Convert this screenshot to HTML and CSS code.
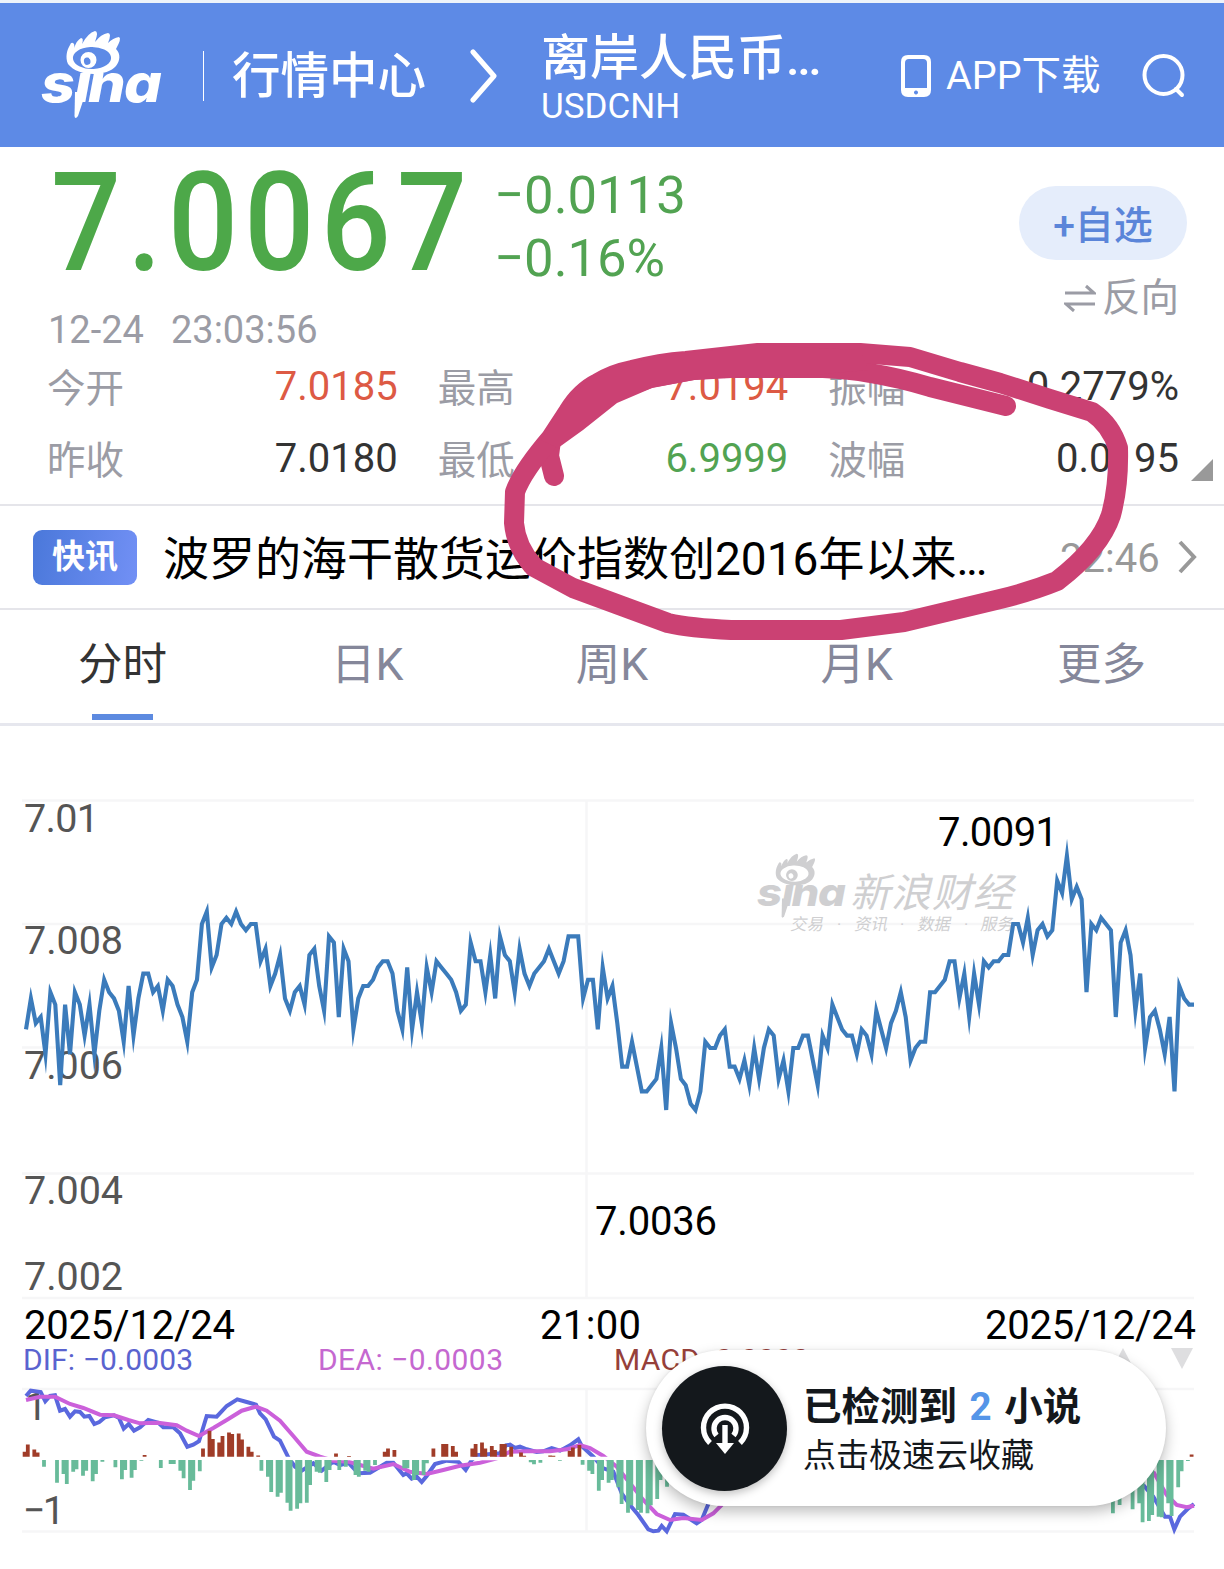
FILE: index.html
```html
<!DOCTYPE html>
<html lang="zh-CN">
<head>
  <meta charset="UTF-8" />
  <meta name="viewport" content="width=device-width, initial-scale=1.0" />
  <title>离岸人民币 USDCNH</title>
  <link rel="stylesheet" href="styles.css">
</head>
<body>
  <header class="topbar">
    <svg class="logo" viewBox="0 0 124 92">
      <g id="sina" fill="currentColor">
        <path fill-rule="evenodd" d="M27 34 C24 27 26 20 29 15 Q30 12 32 13 Q34 14 33 18 Q36 10 40 8 Q43 8 41 14 Q47 3 54 1 Q58 1 54 12 Q60 4 67 3 Q71 3 67 13 Q72 8 78 7 Q81 8 75 19 C80 24 79 31 75 36 C66 47 37 47 27 34 Z M32 29 a19 11 0 1 0 38 -2 a19 11 0 1 0 -38 2 Z"/>
        <path fill-rule="evenodd" d="M39.5 30 a8 8 0 1 1 16 0 a8 8 0 1 1 -16 0 Z M43 32 a3.2 3.6 0 1 0 6.4 -1.6 a3.2 3.6 0 1 0 -6.4 1.6 Z"/>
        <circle cx="49.5" cy="28" r="1.3"/>
        <path d="M34 62 L45 62 L37 86 Q34 90 33.500 86 Z"/>
        <text class="logo-text" transform="scale(1.12 1)" x="0 30 42 74" y="72">sına</text>
      </g>
    </svg>
    <span class="divider"></span>
    <span class="market">行情中心</span>
    <svg class="crumb" viewBox="0 0 28 54"><path d="M3 3 L24 27 L3 51"/></svg>
    <div class="symbol">
      <div class="symbol-name">离岸人民币<span class="dots">...</span></div>
      <div class="symbol-code">USDCNH</div>
    </div>
    <div class="app">
      <svg class="phone" viewBox="0 0 30 42"><path fill="currentColor" fill-rule="evenodd" d="M7 0 H23 Q30 0 30 7 V35 Q30 42 23 42 H7 Q0 42 0 35 V7 Q0 0 7 0 Z M8 4 Q4 4 4 8 V33 H26 V8 Q26 4 22 4 Z M15 35.5 a2 2 0 1 0 .01 0 Z"/></svg>
      <span>APP下载</span>
    </div>
    <svg class="search" viewBox="0 0 44 44"><ellipse cx="21.500" cy="21" rx="19" ry="19"/><path d="M34 35 L40 41"/></svg>
  </header>

  <section class="quote">
    <div class="quote-main">
      <div class="price">7.0067</div>
      <div class="change">
        <div>−0.0113</div>
        <div>−0.16%</div>
      </div>
      <div class="actions">
        <button class="add">+自选</button>
        <div class="reverse">
          <svg viewBox="0 0 32 28"><path d="M1 9 H30 L22 2 M31 20 H2 L10 27"/></svg>
          <span>反向</span>
        </div>
      </div>
    </div>
    <div class="time"><span>12-24</span><span>23:03:56</span></div>
    <div class="stats">
      <div class="stat"><span>今开</span><b class="up">7.0185</b></div>
      <div class="stat"><span>最高</span><b class="up">7.0194</b></div>
      <div class="stat"><span>振幅</span><b>0.2779%</b></div>
      <div class="stat"><span>昨收</span><b>7.0180</b></div>
      <div class="stat"><span>最低</span><b class="down">6.9999</b></div>
      <div class="stat"><span>波幅</span><b>0.0195</b></div>
    </div>
    <span class="expand"></span>
  </section>

  <section class="news">
    <span class="badge">快讯</span>
    <span class="headline">波罗的海干散货运价指数创2016年以来<span class="dots">...</span></span>
    <span class="news-time">22:46</span>
    <svg class="more" viewBox="0 0 20 36"><path d="M3 3 L17 18 L3 33"/></svg>
  </section>

  <nav class="tabs">
    <span class="tab active">分时</span>
    <span class="tab">日K</span>
    <span class="tab">周K</span>
    <span class="tab">月K</span>
    <span class="tab">更多</span>
  </nav>

  <svg class="chart" viewBox="0 726 1224 843">
    <g class="grid">
      <path d="M22 800.5 H1194 M22 924 H1194 M22 1047.5 H1194 M22 1173.5 H1194 M22 1298 H1194 M586.5 800 V1298"/>
      <path d="M22 1389 H1194 M22 1531.5 H1194 M586.5 1389 V1531"/>
    </g>
    <g class="watermark">
      <use href="#sina" transform="translate(757 853) scale(.735)"/>
      <text transform="translate(850 907) skewX(-14)" font-size="40" textLength="163">新浪财经</text>
      <g font-size="16.500">
        <text transform="translate(790 930) skewX(-12)">交易</text>
        <text transform="translate(837 930)">·</text>
        <text transform="translate(854 930) skewX(-12)">资讯</text>
        <text transform="translate(900 930)">·</text>
        <text transform="translate(917 930) skewX(-12)">数据</text>
        <text transform="translate(964 930)">·</text>
        <text transform="translate(980 930) skewX(-12)">服务</text>
      </g>
    </g>
    <g class="axis">
      <text x="24" y="832" textLength="75">7.01</text>
      <text x="24" y="954" textLength="99">7.008</text>
      <text x="24" y="1079" textLength="99">7.006</text>
      <text x="24" y="1204" textLength="99">7.004</text>
      <text x="24" y="1290" textLength="99">7.002</text>
      <text x="25" y="1420">1</text>
      <text x="23" y="1524" textLength="42">−1</text>
    </g>
    <polyline id="priceLine" class="price-line"/>
    <g class="mark">
      <text x="938" y="846" textLength="120">7.0091</text>
      <text x="595" y="1235" textLength="122">7.0036</text>
      <text x="24" y="1339" textLength="211">2025/12/24</text>
      <text x="540" y="1339" textLength="101">21:00</text>
      <text x="985" y="1339" textLength="211">2025/12/24</text>
    </g>
    <g class="legend">
      <text x="23" y="1370" textLength="170" class="dif">DIF: −0.0003</text>
      <text x="318" y="1370" textLength="185" class="dea">DEA: −0.0003</text>
      <text x="614" y="1370" textLength="195" class="macd">MACD: 0.0000</text>
    </g>
    <path d="M1112 1369 L1123 1348 L1134 1369 Z M1171 1348 H1193 L1182 1369 Z" fill="#dedee0"/>
    <polyline id="difLine" class="dif-line"/>
    <polyline id="difTail" class="dif-line"/>
    <polyline id="deaLine" class="dea-line"/>
    <polyline id="deaTail" class="dea-line"/>
    <path d="M22 1458.5 H1194" stroke="#fff" stroke-width="3.4"/>
    <path id="barsUp" fill="#a03c28"/>
    <path id="barsDown" fill="#68bb9a"/>
  </svg>

  <!-- hand-drawn circle -->
  <svg class="scribble" viewBox="0 0 1224 1569">
    <path class="ink" d="M554 476 L549 456 L551 440 L573 414 L608 393 L650 378 L694 370 L731 368 L823 368 Q850 369 870 373 Q900 378 930 387 L1006 406"/>
    <path class="ink" d="M860 353 L910 357 L960 372 L1000 383 L1050 399 L1092 412 Q1111 425 1118 448 Q1119 485 1111 515 Q1100 548 1057 581 Q1030 592 996 600 L904 622 L841 630 L731 630 Q690 628 668 623 L573 588 L534 567 Q516 547 514 523 L515 492 Q522 472 551 438 L568 412 Q580 392 598 383 Q612 374 632 370 Q660 363 686 361 L758 353 Z"/>
    <path class="ink-fill" d="M541 440 L560 408 L592 377 L629 362 L685 353 L758 345 L860 350 L868 370 L823 374 L731 377 L694 380 L652 388 L617 403 L583 430 L558 448 Z"/>
  </svg>

  <div class="toast">
    <div class="toast-icon">
      <svg viewBox="0 0 54 54">
        <path d="M12 42 A21.5 21.5 0 1 1 42 42" />
        <path d="M18.5 34.500 A11 11 0 1 1 35.5 34.500"/>
        <path d="M27 24 V44"/>
        <path class="head" d="M18 42 H36 L27 53 Z"/>
      </svg>
    </div>
    <div class="toast-text">
      <div class="toast-title">已检测到 <em>2</em> 小说</div>
      <div class="toast-sub">点击极速云收藏</div>
    </div>
  </div>

  <script src="script.js"></script>
</body>
</html>
```

FILE: styles.css
```css
* {
  box-sizing: border-box;
}
body {
  margin: 0;
  width: 1224px;
  height: 1569px;
  position: relative;
  overflow: hidden;
  background: #fff;
  color: #333;
  font-family: Roboto, "Noto Sans CJK SC", sans-serif;
}
svg {
  display: block;
  flex: none;
}
.topbar {
  display: flex;
  align-items: center;
  height: 147px;
  border-top: 3px solid #edf3fa;
  padding: 2px 38px 0 41px;
  background: #5d8ae6;
  color: #fff;
  white-space: nowrap;
}
.logo {
  width: 124px;
  height: 92px;
}
.logo-text {
  font: italic 800 53px Inter, "Open Sans", sans-serif;
}
.divider {
  width: 1px;
  height: 50px;
  margin: 0 28px 0 38px;
  background: #fff;
}
.market {
  width: 194px;
  padding-top: 2px;
  font-size: 48.5px;
  font-weight: 500;
  line-height: 60px;
}
.crumb {
  width: 28px;
  height: 54px;
  margin: 0 43px 0 44px;
  fill: none;
  stroke: #fff;
  stroke-width: 5;
  stroke-linecap: round;
  stroke-linejoin: round;
}
.symbol {
  width: 360px;
}
.symbol-name {
  padding-top: 9px;
  font-size: 49px;
  font-weight: 500;
  line-height: 52px;
}
.dots {
  letter-spacing: -2.5px;
}
.symbol-code {
  font-size: 35px;
  line-height: 44px;
}
.app {
  display: flex;
  align-items: center;
  gap: 15px;
  font-size: 39.5px;
  line-height: 50px;
}
.phone {
  width: 30px;
  height: 42px;
}
.search {
  width: 44px;
  height: 44px;
  margin-left: auto;
  fill: none;
  stroke: #fff;
  stroke-width: 4;
  stroke-linecap: round;
}

.quote {
  position: relative;
  height: 359px;
  border-bottom: 2px solid #e5e5ea;
}
.quote-main {
  display: flex;
  height: 162px;
  padding: 0 37px 0 51px;
}
.price {
  width: 443px;
  color: #4da849;
  font-size: 137px;
  font-weight: 500;
  letter-spacing: 7px;
  line-height: 152px;
  transform: scaleX(0.9);
  transform-origin: left;
}
.change {
  padding-top: 17px;
  color: #52a352;
  font-size: 52.6px;
  line-height: 62.5px;
}
.actions {
  display: flex;
  flex-direction: column;
  align-items: flex-end;
  margin-left: auto;
  padding-top: 39px;
}
.add {
  flex: none;
  width: 168px;
  height: 74px;
  padding: 0 0 2px;
  border: 0;
  border-radius: 37px;
  background: #e5edfb;
  color: #5b85d9;
  font: 500 39px Roboto, "Noto Sans CJK SC", sans-serif;
}
.reverse {
  display: flex;
  align-items: center;
  gap: 6px;
  margin: 13px 8px 0 0;
  color: #9b9ca5;
  font-size: 38.5px;
  line-height: 50px;
}
.reverse svg {
  width: 32px;
  height: 28px;
  fill: none;
  stroke: #9b9ca5;
  stroke-width: 3;
}
.time {
  display: flex;
  gap: 27px;
  padding-left: 48px;
  color: #9b9ca5;
  font-size: 38px;
  line-height: 42px;
}
.stats {
  display: grid;
  grid-template-columns: repeat(3, 1fr);
  column-gap: 40px;
  margin: 0 45px 0 47px;
}
.stat {
  display: flex;
  justify-content: space-between;
  height: 72px;
  font-size: 38.5px;
  line-height: 72px;
  color: #9b9ca5;
}
.stat span {
  padding-top: 2px;
}
.stat b {
  color: #333;
  font-size: 40px;
  font-weight: 400;
}
.stat .up {
  color: #dd5a44;
}
.stat .down {
  color: #52a352;
}
.expand {
  position: absolute;
  left: 1191px;
  top: 312px;
  border-left: 22px solid transparent;
  border-bottom: 22px solid #999;
}

.news {
  display: flex;
  align-items: center;
  height: 104px;
  padding: 0 27px 0 33px;
  border-bottom: 2px solid #e5e5ea;
  white-space: nowrap;
}
.badge {
  flex: none;
  width: 104px;
  height: 55px;
  border-radius: 9px;
  background: linear-gradient(100deg, #4a78da, #7290f5);
  color: #fff;
  font-size: 33px;
  font-weight: 700;
  line-height: 54px;
  text-align: center;
}
.headline {
  flex: none;
  width: 923px;
  padding: 4px 0 0 26px;
  color: #000;
  font-size: 46px;
  line-height: 60px;
}
.news-time {
  padding-top: 2px;
  color: #999;
  font-size: 40px;
}
.more {
  width: 20px;
  height: 36px;
  margin-left: auto;
  fill: none;
  stroke: #999;
  stroke-width: 4;
}

.tabs {
  display: grid;
  grid-template-columns: repeat(5, 1fr);
  height: 116px;
  border-bottom: 3px solid #e6e7ee;
  text-align: center;
}
.tab {
  display: flex;
  flex-direction: column;
  align-items: center;
  color: #85879a;
  font-size: 44.5px;
  line-height: 110px;
}
.tab.active {
  color: #333;
}
.tab.active::after {
  content: "";
  width: 61px;
  height: 6px;
  margin-top: -6px;
  background: #5d8ae0;
}

.chart {
  width: 1224px;
  height: 843px;
}
.grid {
  fill: none;
  stroke: #f6f6f7;
  stroke-width: 2.5;
}
.watermark {
  color: #cfcfd1;
  fill: #cfcfd1;
}
.axis {
  fill: #555;
  font-size: 39.5px;
}
.mark {
  fill: #000;
  font-size: 40px;
}
.legend {
  font-size: 30px;
}
.dif {
  fill: #5a63cf;
}
.dea {
  fill: #c568d0;
}
.macd {
  fill: #96403a;
}
.price-line {
  fill: none;
  stroke: #3b7bbb;
  stroke-width: 4.1;
  stroke-miterlimit: 10;
}
.dif-line,
.dea-line {
  fill: none;
  stroke: #5a68de;
  stroke-width: 4;
}
.dea-line {
  stroke: #cb60da;
}

.scribble {
  position: absolute;
  left: 0;
  top: 0;
  width: 1224px;
  height: 1569px;
  pointer-events: none;
}
.ink {
  fill: none;
  stroke: #cb4173;
  stroke-width: 20;
  stroke-linecap: round;
  stroke-linejoin: round;
}
.ink-fill {
  fill: #cb4173;
}

.toast {
  position: absolute;
  left: 646px;
  top: 1350px;
  display: flex;
  align-items: center;
  gap: 16px;
  width: 520px;
  height: 156px;
  padding-left: 16px;
  border-radius: 78px;
  background: #fff;
  color: #14181c;
  box-shadow: 0 6px 14px rgba(0, 0, 0, 0.25), 0 0 3px rgba(0, 0, 0, 0.08);
}
.toast-icon {
  display: flex;
  align-items: center;
  justify-content: center;
  width: 125px;
  height: 125px;
  border-radius: 50%;
  background: #14181c;
  box-shadow: 0 3px 8px rgba(0, 0, 0, 0.25);
}
.toast-icon svg {
  width: 54px;
  height: 54px;
  fill: none;
  stroke: #fff;
  stroke-width: 5.4;
}
.toast-icon .head {
  fill: #fff;
  stroke: none;
}
.toast-text {
  padding-top: 5px;
}
.toast-title {
  font-size: 38.5px;
  font-weight: 700;
  line-height: 50px;
  word-spacing: 3px;
}
.toast-title em {
  color: #5595e8;
  font-style: normal;
}
.toast-sub {
  font-size: 33px;
  line-height: 48px;
}
```

FILE: script.js
```js
// ticks (0.0001) below 7.008, one per 2 minutes
const ticks = [
  17, 12, 16, 15, 21, 11, 13, 26, 13, 21, 11, 13, 18, 13, 21, 14, 9, 11, 12, 14,
  19, 10, 18, 12, 8, 8, 11, 10, 14, 9, 10, 13, 15, 19, 11, 9, 0, -2, 7, 5,
  0, -1, 0, -2, 0, 1, 0, 0, 6, 4, 10, 8, 5, 12, 14, 11, 10, 13, 5, 4,
  10, 14, 2, 3, 15, 4, 6, 17, 12, 10, 10, 9, 7, 6, 6, 8, 14, 17, 7, 17,
  11, 16, 7, 11, 6, 7, 8, 9, 11, 14, 13, 3, 6, 6, 11, 5, 12, 2, 5, 6,
  11, 4, 8, 10, 8, 7, 6, 4, 6, 8, 6, 2, 2, 2, 12, 9, 9, 17, 7, 12,
  10, 16, 23, 23, 19, 23, 27, 27, 26, 25, 20, 30, 16, 20, 25, 26, 29, 30, 27, 19,
  20, 20, 18, 17, 23, 23, 25, 22, 26, 20, 25, 20, 17, 18, 25, 22, 27, 20, 20, 18,
  18, 22, 26, 18, 20, 13, 15, 17, 18, 18, 21, 17, 18, 21, 14, 17, 20, 16, 14, 11,
  15, 22, 20, 19, 19, 11, 11, 10, 9, 6, 6, 12, 8, 15, 8, 13, 6, 7, 6, 6,
  5, 5, 0, 0, 3, -1, 5, 1, 0, 2, 1, -7, -5, -11, -4, -6, -4, 11, 0, 1,
  -1, 0, 1, 15, 3, 1, 5, 14, 8, 20, 15, 14, 17, 21, 15, 27, 10, 12, 13, 13
];
const step = 1168 / (ticks.length - 1);
document.getElementById("priceLine").setAttribute("points",
  ticks.map((t, i) => (26 + i * step).toFixed(1) + "," + (924 + t * 6.2).toFixed(1)).join(" "));

// indicator canvas is drawn at 3x
function setLine(id, pts) {
  let s = "";
  for (let i = 0; i < pts.length; i += 2) {
    s += (pts[i] / 3).toFixed(1) + "," + (1290 + pts[i + 1] / 3).toFixed(1) + " ";
  }
  document.getElementById(id).setAttribute("points", s);
}
setLine("difLine", [
  78, 318, 92, 302, 122, 306, 136, 334, 150, 318, 165, 316, 180, 362, 195, 357, 210, 380, 225, 364,
  240, 366, 253, 380, 268, 378, 283, 402, 298, 396, 315, 382, 342, 376, 357, 384, 371, 416, 386, 402,
  402, 422, 420, 412, 445, 390, 475, 398, 490, 412, 520, 412, 540, 430, 562, 470, 580, 464, 597, 454,
  620, 378, 650, 380, 680, 348, 712, 328, 740, 336, 768, 344, 780, 370, 797, 388, 822, 440, 840, 452,
  865, 502, 885, 530, 905, 542, 940, 520, 965, 542, 1000, 515, 1020, 525, 1045, 518, 1075, 550, 1110, 548,
  1160, 518, 1180, 518, 1210, 555, 1220, 550, 1235, 566, 1250, 560, 1265, 576, 1280, 558, 1305, 522, 1340, 512,
  1375, 515, 1397, 540, 1415, 510, 1430, 496, 1500, 490, 1518, 466, 1530, 464, 1545, 474, 1560, 470, 1580, 478,
  1610, 486, 1630, 484, 1655, 474, 1680, 482, 1710, 466, 1735, 448, 1745, 468, 1780, 500, 1810, 535, 1840, 545,
  1865, 610, 1890, 645, 1915, 675, 1945, 718, 1960, 724, 1975, 722, 1985, 708, 2000, 724, 2025, 672, 2050, 674,
  2090, 700, 2105, 690, 2130, 630
]);
setLine("difTail", [3430, 585, 3460, 620, 3495, 680, 3510, 680, 3523, 718, 3540, 680, 3565, 655, 3582, 642]);
setLine("deaLine", [
  78, 330, 120, 320, 165, 320, 210, 342, 250, 354, 300, 374, 342, 376, 385, 390, 420, 400, 475, 398,
  530, 406, 560, 422, 597, 438, 640, 414, 680, 390, 725, 362, 768, 350, 800, 362, 840, 392, 880, 438,
  920, 485, 960, 500, 1000, 512, 1045, 515, 1080, 525, 1120, 536, 1180, 522, 1230, 545, 1280, 552, 1330, 540,
  1380, 527, 1440, 518, 1490, 505, 1530, 485, 1580, 484, 1650, 484, 1700, 478, 1740, 465, 1770, 474, 1810, 498,
  1850, 530, 1890, 580, 1930, 630, 1970, 672, 2010, 690, 2050, 684, 2105, 690, 2140, 670, 2170, 640
]);
setLine("deaTail", [3460, 545, 3500, 615, 3530, 645, 3560, 652, 3582, 647]);

// MACD bars, in pairs
const bars = [
  15, 37, 22, 13, -20, 0, 0, -68, -42, -72, -35, -28, -47, -32, -64, -42, -5, 0, 0, -22,
  -58, -30, -53, -30, -2, 5, 0, 0, -24, 0, -12, -12, -32, -55, -90, -62, -34, 25, 78, 53,
  43, 62, 73, 68, 70, 52, 30, 15, 4, -32, -50, -96, -110, -98, -128, -152, -146, -130, -128, -75,
  -35, -38, -66, -30, 10, -30, -20, 2, -45, -50, -32, -35, -15, 0, 15, 25, 20, 0, -25, -25,
  -60, -45, -45, -10, 25, 0, 38, 38, 32, 15, 0, 0, 25, 38, 43, 25, 32, 20, 38, 38,
  30, 0, 13, 3, -7, -13, -8, 0, 4, 3, -2, 0, 18, 28, 35, -14, -32, -42, -92, -60,
  -68, -60, -82, -132, -158, -136, -150, -158, -160, -136, -117, -60, -80, -60
];
const list = bars.map((v, i) => [73 + 29.2 * (i >> 1) + (i % 2) * 9.8, v]);
list.push([3338, -160], [3358, -135], [3397, -148], [3417, -130], [3427, -187], [3446, -183],
  [3456, -165], [3475, -170], [3485, -172], [3504, -130], [3514, -168], [3534, -82], [3544, -34],
  [3563, -3], [3574, 7]);
let up = "", down = "";
for (const [x, v] of list) {
  if (!v) continue;
  const left = ((x - 5) / 3).toFixed(1);
  const h = (v / 3).toFixed(1);
  if (v > 0) up += `M${left} 1456.7 h3.8 v${-h} h-3.8 Z`;
  else down += `M${left} 1460 h3.8 v${-h} h-3.8 Z`;
}
document.getElementById("barsUp").setAttribute("d", up);
document.getElementById("barsDown").setAttribute("d", down);
```
